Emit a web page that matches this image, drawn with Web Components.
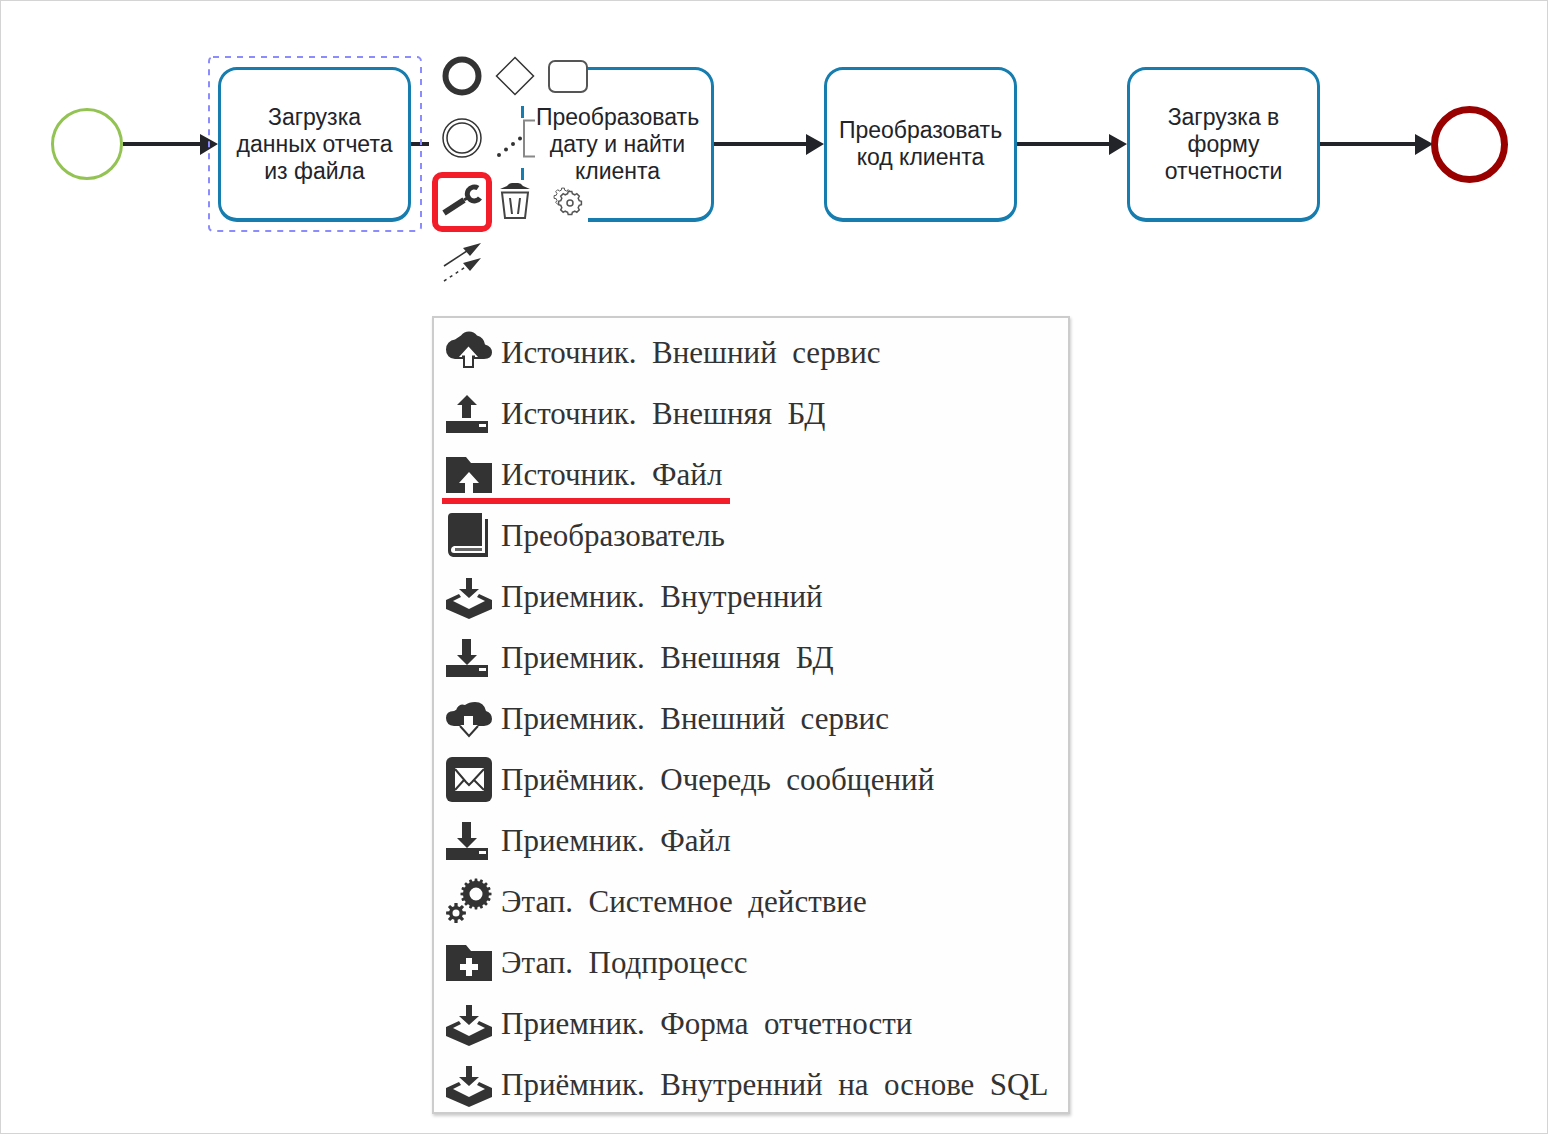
<!DOCTYPE html>
<html lang="ru">
<head>
<meta charset="utf-8">
<title>Редактор процесса</title>
<style>
  body {
    margin: 0;
    background: #fff;
  }
</style>
</head>
<body>
<process-editor>
  <flow-canvas slot="canvas">
    <flow-event x="51" y="108" kind="start"></flow-event>
    <flow-task x="218" y="67" selected>Загрузка данных отчета из файла</flow-task>
    <flow-task x="521" y="67">Преобразовать дату и найти клиента</flow-task>
    <flow-task x="824" y="67">Преобразовать код клиента</flow-task>
    <flow-task x="1127" y="67">Загрузка в форму отчетности</flow-task>
    <flow-event x="1431" y="106" kind="end"></flow-event>
    <context-pad></context-pad>
  </flow-canvas>
  <type-menu slot="menu">
    <type-item icon="cloud-up">Источник.  Внешний  сервис</type-item>
    <type-item icon="drive-up">Источник.  Внешняя  БД</type-item>
    <type-item icon="folder-up" marked>Источник.  Файл</type-item>
    <type-item icon="book">Преобразователь</type-item>
    <type-item icon="tray">Приемник.  Внутренний</type-item>
    <type-item icon="drive-down">Приемник.  Внешняя  БД</type-item>
    <type-item icon="cloud-down">Приемник.  Внешний  сервис</type-item>
    <type-item icon="mail">Приёмник.  Очередь  сообщений</type-item>
    <type-item icon="drive-down">Приемник.  Файл</type-item>
    <type-item icon="gears">Этап.  Системное  действие</type-item>
    <type-item icon="folder-plus">Этап.  Подпроцесс</type-item>
    <type-item icon="tray">Приемник.  Форма  отчетности</type-item>
    <type-item icon="tray">Приёмник.  Внутренний  на  основе  SQL</type-item>
  </type-menu>
</process-editor>

<script>
// closed outline of a cog with square teeth
function cog(cx, cy, teeth, outer, inner) {
  const pts = [];
  const step = (Math.PI * 2) / teeth;
  for (let i = 0; i < teeth; i++) {
    const a = i * step - Math.PI / 2;
    for (const [k, r] of [[-0.32, inner], [-0.2, outer], [0.2, outer], [0.32, inner]]) {
      pts.push((cx + Math.cos(a + k * step) * r).toFixed(1) + " " + (cy + Math.sin(a + k * step) * r).toFixed(1));
    }
  }
  return "M" + pts.join("L") + "Z";
}

function hole(cx, cy, r) {
  return `M${cx - r} ${cy}a${r} ${r} 0 1 0 ${r * 2} 0a${r} ${r} 0 1 0 ${-r * 2} 0Z`;
}

const drive = `<path fill-rule="evenodd" d="M0 30H42V42H0ZM33 33V36H40V33Z"/>`;
const folder = `M0 5H20L25 11H46V41H0Z`;

// 46x46
const MENU_ICONS = {
  "cloud-up": `
    <path d="M9 29a9 9 0 0 1-9-9.500 9.500 9.500 0 0 1 9-10q3-2 6-4 3-4 8-4t8 4q7 2 8 9 7 2 7 8t-8 6.500Z"/>
    <path d="M22.500 16.500L32 27H27.500V37H17.500V27H13Z" fill="#fff"/>
    <path d="M16 26.500H18V37H27V26.500H29" fill="none" stroke="#333" stroke-width="2"/>`,
  "drive-up": `<path d="M21 4L31 14H25V27H16V14H11Z"/>` + drive,
  "folder-up": `<path fill-rule="evenodd" d="${folder}M23 20L13 31H19V41H27V31H33Z"/>`,
  "book": `
    <path fill-rule="evenodd" d="M6 0H36V33H8Q5 34 5 37T8 40H39V6H42V44H7Q2 43 2 38V4Q2 0 6 0Z"/>
    <path d="M9 35H36V38H9Z" fill="#666"/>`,
  "tray": `
    <path d="M20 4H26V15H33L23 24L13 15H20Z"/>
    <path d="M13 20L0 26V35L23 45L46 35V26L33 20L31 23L39 27L23 35L7 27L15 23Z"/>`,
  "drive-down": `<path d="M16 4H25V20H31L21 30L11 20H16Z"/>` + drive,
  "cloud-down": `
    <path d="M8 30Q0 29 0 22T8 15Q11 14 11 12 14 7 19 9 23 6 29 6q9 0 11 9 6 2 6 8t-8 7Z"/>
    <path d="M18 20H27V29H32L23 40L14 29H18Z" fill="#fff"/>
    <path d="M14 30L23 40L32 30" fill="none" stroke="#333" stroke-width="2"/>`,
  "mail": `
    <rect width="46" height="45" rx="6"/>
    <path d="M9 11H38V34H9Z" fill="#fff"/>
    <path d="M9 12L20 25L23 28L26 25L38 12M9 33L18 23M38 33L28 23" fill="none" stroke="#333" stroke-width="2"/>`,
  "gears": `
    <path fill-rule="evenodd" d="${cog(30, 15, 16, 15.5, 13)}${hole(30, 15, 6.5)}"/>
    <path fill-rule="evenodd" d="${cog(10, 34, 8, 10, 7)}${hole(10, 34, 3.5)}"/>`,
  "folder-plus": `<path fill-rule="evenodd" d="${folder}M20 18V24H14V30H20V36H26V30H32V24H26V18Z"/>`
};

// 40x40
const PAD_ICONS = {
  "end": `<circle cx="20" cy="20" r="16.500" stroke-width="6"/>`,
  "gateway": `<path d="M20 1.500L38.500 20L20 38.500L1.500 20Z"/>`,
  "task": `<rect x="1" y="5" width="38" height="31" rx="6" stroke="#555" stroke-width="2"/>`,
  "intermediate": `<circle cx="20" cy="20" r="19"/><circle cx="20" cy="20" r="15"/>`,
  "annotation": `
    <path d="M40 2.500H29V38.500H40" stroke="#888" stroke-width="2"/>
    <path d="M4 37h0M11 31.500h0M18 26h0M25 20.500h0" stroke-width="4" stroke-linecap="round"/>`,
  "wrench": `
    <path d="M2 33L22 20" stroke-width="6"/>
    <path d="M22 20L27 17" stroke-width="3"/>
    <path d="M36 8A7 7 0 1 0 38 18" stroke-width="5"/>`,
  "trash": `
    <path d="M5 9L12 6Q14 3 17 3H23Q26 3 28 6L35 9Z" fill="#333" stroke="none"/>
    <path d="M7 12.500H33L30 38H10ZM15 18L17 34M25 18L23 34" stroke="#444" stroke-width="2"/>`,
  "service": `
    <path d="${cog(15, 17, 8, 9, 7)}" stroke="#555" stroke-width="1"/>
    <path d="${cog(22, 23, 8, 11.5, 9.5)}" fill="#fff" stroke="#555"/>
    <circle cx="22" cy="23" r="3" stroke="#555"/>`,
  "connect": `
    <path d="M2 24L28 7"/>
    <path d="M2 39L28 22" stroke-dasharray="3 4"/>
    <path d="M21 6L39 1L28 14ZM21 21L39 16L28 29Z" fill="#333" stroke="none"/>`
};

const PAD_ROWS = [
  [["end", "Конечное событие"], ["gateway", "Шлюз"], ["task", "Задача"]],
  [["intermediate", "Промежуточное событие"], ["annotation", "Комментарий"]],
  [["wrench", "Изменить тип"], ["trash", "Удалить"], ["service", "Настройки"]],
  [["connect", "Соединить"]]
];

class ProcessEditor extends HTMLElement {
  constructor() {
    super();
    this.attachShadow({ mode: "open" }).innerHTML = `
      <style>
        :host {
          display: block;
          box-sizing: border-box;
          min-height: 100vh;
          padding-bottom: 20px;
          outline: 1px solid #d4d4d4;
          outline-offset: -1px;
        }
        main {
          display: flex;
          flex-direction: column;
          align-items: flex-start;
        }
        ::slotted([slot="canvas"]) {
          align-self: stretch;
        }
        ::slotted([slot="menu"]) {
          margin-left: 432px;
        }
      </style>
      <main>
        <slot name="canvas"></slot>
        <slot name="menu"></slot>
      </main>
    `;
  }
}

class FlowCanvas extends HTMLElement {
  constructor() {
    super();
    const links = [[123, 218], [411, 521], [714, 824], [1017, 1127], [1320, 1433]];
    this.attachShadow({ mode: "open" }).innerHTML = `
      <style>
        :host {
          display: block;
          position: relative;
          height: 316px;
        }
        svg {
          position: absolute;
          left: 0;
          top: 0;
          width: 100%;
          height: 100%;
        }
      </style>
      <svg aria-hidden="true" fill="#22242a">
        ${links.map(([a, b]) => `<path d="M${a} 142H${b - 18}V134L${b} 144L${b - 18} 155V146H${a}Z"/>`).join("")}
      </svg>
      <slot></slot>
    `;
  }
}

// anything that sits on the canvas takes its place from x and y
class FlowNode extends HTMLElement {
  connectedCallback() {
    this.style.left = this.getAttribute("x") + "px";
    this.style.top = this.getAttribute("y") + "px";
  }
}

class FlowEvent extends FlowNode {
  constructor() {
    super();
    this.attachShadow({ mode: "open" }).innerHTML = `
      <style>
        :host {
          display: block;
          position: absolute;
          box-sizing: border-box;
          border-radius: 50%;
          background: #fff;
        }
        :host([kind="start"]) {
          width: 72px;
          height: 72px;
          border: 3px solid #93c353;
        }
        :host([kind="end"]) {
          width: 77px;
          height: 77px;
          border: 7px solid #990000;
        }
      </style>
    `;
  }
}

class FlowTask extends FlowNode {
  constructor() {
    super();
    this.attachShadow({ mode: "open" }).innerHTML = `
      <style>
        :host {
          display: flex;
          position: absolute;
          box-sizing: border-box;
          width: 193px;
          height: 155px;
          padding: 0 4px;
          align-items: center;
          justify-content: center;
          border: 4px solid #167dae;
          border-width: 3px 3px 4px 3px;
          border-radius: 19px;
          background: #fff;
          color: #22242a;
          font: 23px/27px "Liberation Sans", Arial, sans-serif;
          text-align: center;
        }
        svg {
          display: none;
          position: absolute;
          left: -13px;
          top: -14px;
          width: 215px;
          height: 177px;
        }
        :host([selected]) svg {
          display: block;
        }
      </style>
      <span><slot></slot></span>
      <svg aria-hidden="true"><rect x="1" y="1" width="212" height="174" rx="4" fill="none"
        stroke="#8c8cff" stroke-width="2" stroke-dasharray="6 6"/></svg>
    `;
  }
}

class ContextPad extends HTMLElement {
  constructor() {
    super();
    this.attachShadow({ mode: "open" }).innerHTML = `
      <style>
        :host {
          display: grid;
          position: absolute;
          left: 429px;
          top: 56px;
          row-gap: 12px;
        }
        div {
          display: flex;
        }
        button {
          display: flex;
          position: relative;
          width: 53px;
          height: 50px;
          padding: 0;
          justify-content: flex-end;
          align-items: flex-start;
          border: 0;
          background: #fff;
        }
        svg {
          width: 40px;
          height: 40px;
        }
        .active {
          z-index: 1;
        }
        .active::after {
          content: "";
          position: absolute;
          box-sizing: border-box;
          left: 3px;
          top: -8px;
          width: 60px;
          height: 60px;
          border: 6px solid #f31d2a;
          border-radius: 10px;
        }
      </style>
      ${PAD_ROWS.map(row => `<div>${row.map(([icon, label]) => `
        <button type="button" aria-label="${label}" class="${icon === "wrench" ? "active" : ""}">
          <svg viewBox="0 0 40 40" fill="none" stroke="#333" stroke-width="1.500">${PAD_ICONS[icon]}</svg>
        </button>`).join("")}</div>`).join("")}
    `;
  }
}

class TypeMenu extends HTMLElement {
  constructor() {
    super();
    this.attachShadow({ mode: "open" }).innerHTML = `
      <style>
        :host {
          display: flex;
          flex-direction: column;
          box-sizing: border-box;
          gap: 11px;
          padding: 10px 20px 2px 12px;
          border: 2px solid #ccc;
          box-shadow: 1px 2px 3px #ccc;
          background: #fefefe;
        }
      </style>
      <slot></slot>
    `;
  }
}

class TypeItem extends HTMLElement {
  constructor() {
    super();
    this.attachShadow({ mode: "open" }).innerHTML = `
      <style>
        :host {
          display: block;
          position: relative;
        }
        button {
          display: flex;
          width: 100%;
          height: 50px;
          padding: 0;
          align-items: center;
          gap: 9px;
          border: 0;
          background: none;
          color: #333;
          font: 31px/50px "Liberation Serif", "Times New Roman", serif;
          text-align: left;
          white-space: pre;
        }
        svg {
          flex: none;
          width: 46px;
          height: 46px;
          overflow: visible;
        }
        :host([marked])::after {
          content: "";
          position: absolute;
          left: -4px;
          bottom: -4px;
          width: 288px;
          height: 6px;
          background: #f31d2a;
        }
      </style>
      <button type="button"><svg viewBox="0 0 46 46" fill="#333" aria-hidden="true">${MENU_ICONS[this.getAttribute("icon")]}</svg><slot></slot></button>
    `;
  }
}

customElements.define("process-editor", ProcessEditor);
customElements.define("flow-canvas", FlowCanvas);
customElements.define("flow-event", FlowEvent);
customElements.define("flow-task", FlowTask);
customElements.define("context-pad", ContextPad);
customElements.define("type-menu", TypeMenu);
customElements.define("type-item", TypeItem);
</script>
</body>
</html>
